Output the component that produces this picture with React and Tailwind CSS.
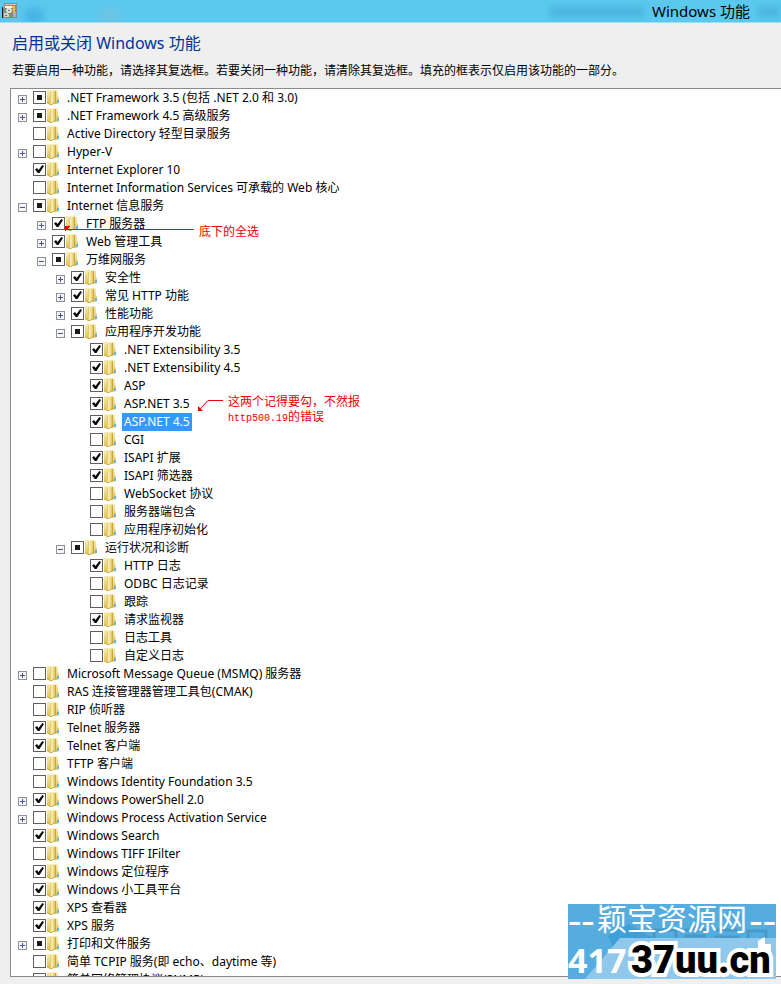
import React, { useState } from 'react'

// level, label, state ('on' | 'off' | 'part'), expander ('+' | '-' | '')
const FEATURES = [
  [0, '.NET Framework 3.5 (包括 .NET 2.0 和 3.0)', 'part', '+'],
  [0, '.NET Framework 4.5 高级服务', 'part', '+'],
  [0, 'Active Directory 轻型目录服务', 'off', ''],
  [0, 'Hyper-V', 'off', '+'],
  [0, 'Internet Explorer 10', 'on', ''],
  [0, 'Internet Information Services 可承载的 Web 核心', 'off', ''],
  [0, 'Internet 信息服务', 'part', '-'],
  [1, 'FTP 服务器', 'on', '+'],
  [1, 'Web 管理工具', 'on', '+'],
  [1, '万维网服务', 'part', '-'],
  [2, '安全性', 'on', '+'],
  [2, '常见 HTTP 功能', 'on', '+'],
  [2, '性能功能', 'on', '+'],
  [2, '应用程序开发功能', 'part', '-'],
  [3, '.NET Extensibility 3.5', 'on', ''],
  [3, '.NET Extensibility 4.5', 'on', ''],
  [3, 'ASP', 'on', ''],
  [3, 'ASP.NET 3.5', 'on', ''],
  [3, 'ASP.NET 4.5', 'on', ''],
  [3, 'CGI', 'off', ''],
  [3, 'ISAPI 扩展', 'on', ''],
  [3, 'ISAPI 筛选器', 'on', ''],
  [3, 'WebSocket 协议', 'off', ''],
  [3, '服务器端包含', 'off', ''],
  [3, '应用程序初始化', 'off', ''],
  [2, '运行状况和诊断', 'part', '-'],
  [3, 'HTTP 日志', 'on', ''],
  [3, 'ODBC 日志记录', 'off', ''],
  [3, '跟踪', 'off', ''],
  [3, '请求监视器', 'on', ''],
  [3, '日志工具', 'off', ''],
  [3, '自定义日志', 'off', ''],
  [0, 'Microsoft Message Queue (MSMQ) 服务器', 'off', '+'],
  [0, 'RAS 连接管理器管理工具包(CMAK)', 'off', ''],
  [0, 'RIP 侦听器', 'off', ''],
  [0, 'Telnet 服务器', 'on', ''],
  [0, 'Telnet 客户端', 'on', ''],
  [0, 'TFTP 客户端', 'off', ''],
  [0, 'Windows Identity Foundation 3.5', 'off', ''],
  [0, 'Windows PowerShell 2.0', 'on', '+'],
  [0, 'Windows Process Activation Service', 'off', '+'],
  [0, 'Windows Search', 'on', ''],
  [0, 'Windows TIFF IFilter', 'off', ''],
  [0, 'Windows 定位程序', 'on', ''],
  [0, 'Windows 小工具平台', 'on', ''],
  [0, 'XPS 查看器', 'on', ''],
  [0, 'XPS 服务', 'on', ''],
  [0, '打印和文件服务', 'part', '+'],
  [0, '简单 TCPIP 服务(即 echo、daytime 等)', 'off', ''],
  [0, '简单网络管理协议(SNMP)', 'off', ''],
]

const INDENT = ['pl-[7px]', 'pl-[26px]', 'pl-[45px]', 'pl-[64px]']

const SELECTED = 'ASP.NET 4.5'

function TitleIcon() {
  return (
    <svg width="16" height="16" viewBox="0 0 16 16" shapeRendering="crispEdges" aria-hidden="true">
      <path d="M2 0h13v15H2z" fill="#8f8a84" />
      <path d="M3 1h11v1H3z" fill="#c9c5be" />
      <path d="M3 3h10v2H3z" fill="#f6f3ea" />
      <path d="M10 3h3v6h-2v-3h-1z" fill="#f0b93c" />
      <path d="M0 4h1v11H0z" fill="#1c1c1c" />
      <path d="M1 5h10v10H1z" fill="#8b8880" />
      <path d="M5 5h4v1h1v3H9v1H5V9H4V6h1z" fill="#d9ddd0" />
      <path d="M6 7h2v1H6z" fill="#6d7a68" />
      <path d="M2 10h4v1h1v3H2z" fill="#cfd6c6" />
      <path d="M3 12h2v1H3z" fill="#5d6a5a" />
      <path d="M11 9h3v5h-3z" fill="#b3aea6" />
    </svg>
  )
}

function FolderIcon() {
  return (
    <svg className="shrink-0" width="14" height="15" viewBox="0 0 14 15" aria-hidden="true">
      <defs>
        <linearGradient id="folderFront" x1="0" x2="1">
          <stop offset="0" stopColor="#d9bb55" />
          <stop offset="0.35" stopColor="#fbf3bd" />
          <stop offset="1" stopColor="#dfc157" />
        </linearGradient>
        <linearGradient id="folderBack" x1="0" x2="0" y1="0" y2="1">
          <stop offset="0" stopColor="#f8efb6" />
          <stop offset="1" stopColor="#dfc052" />
        </linearGradient>
      </defs>
      <path d="M1 0h10l1 1v6l1 1v5l-3 1H2l-1-1z" fill="url(#folderBack)" />
      <path d="M4 2l1-1h4v12l-3 2H4z" fill="url(#folderFront)" />
      <path d="M9.500 1v12" stroke="#c8a73e" fill="none" />
      <path d="M1 12.500l3 2h2l3-2" stroke="#cfae45" fill="none" />
      <path d="M11 10h2v3h-2z" fill="#62b4e4" />
    </svg>
  )
}

function Expander({ open, label }) {
  return (
    <button type="button" aria-label={label} aria-expanded={open} className="mt-1 block h-[9px] w-[9px]">
      <svg width="9" height="9" viewBox="0 0 9 9" shapeRendering="crispEdges" aria-hidden="true">
        <path d="M0.500 0.500h8v8h-8z" fill="#f7f7f7" stroke="#919191" />
        <path d="M2 4h5v1H2z" fill="#3b55a5" />
        {!open && <path d="M4 2h1v5H4z" fill="#3b55a5" />}
      </svg>
    </button>
  )
}

function FeatureCheckbox({ id, state, onChange }) {
  return (
    <span className="relative h-[13px] w-[13px] shrink-0">
      <input
        id={id}
        type="checkbox"
        checked={state === 'on'}
        onChange={onChange}
        className="block h-[13px] w-[13px] appearance-none border border-[#5f5f5f] bg-white"
      />
      <svg className="pointer-events-none absolute inset-0" width="13" height="13" viewBox="0 0 13 13" aria-hidden="true">
        {state === 'on' && <path d="M2 6.500l2-1.500 1.500 2L9.300 2l1.700 1L6.500 10H4.800z" fill="#0a0a0a" />}
        {state === 'part' && <path d="M4 4h5v5H4z" fill="#1a1a1a" />}
      </svg>
    </span>
  )
}

function FeatureRow({ index, feature, state, onToggle }) {
  const [level, label, , expander] = feature
  const id = `feature-${index}`

  return (
    <li className={`flex h-[18px] items-center whitespace-nowrap pb-px ${INDENT[level]}`}>
      <span className="mr-[6px] w-[9px] shrink-0">
        {expander && <Expander open={expander === '-'} label={label} />}
      </span>
      <FeatureCheckbox id={id} state={state} onChange={onToggle} />
      <FolderIcon />
      <label
        htmlFor={id}
        className={`ml-[5px] self-start px-[2px] leading-[18px] ${label === SELECTED ? 'bg-[#3399ff] text-white' : ''}`}
      >
        {label}
      </label>
    </li>
  )
}

// Red notes with arrows laid over the tree
function Notes() {
  return (
    <div className="pointer-events-none absolute inset-0 text-xs text-[#f00000]">
      <svg className="absolute left-[53px] top-[133px]" width="132" height="14" viewBox="0 0 132 14" shapeRendering="crispEdges" aria-hidden="true">
        <path d="M2 7h128v1H2z" fill="#f00000" />
        <path d="M1 4h5L1 9z" fill="#f00000" />
      </svg>
      <p className="absolute left-[188px] top-[135px] leading-4">底下的全选</p>
      <svg className="absolute left-[186px] top-[308px]" width="28" height="16" viewBox="0 0 28 16" aria-hidden="true">
        <path d="M26 3.500H11L3 12" fill="none" stroke="#f00000" />
        <path d="M1 9v5h5z" fill="#f00000" />
      </svg>
      <p className="absolute left-[217px] top-[305px] leading-[15px]">
        这两个记得要勾，不然报
        <br />
        <span className="font-['Liberation_Mono',monospace] text-[10px]">http500.19</span>的错误
      </p>
    </div>
  )
}

function Watermark() {
  return (
    <div className="absolute bottom-[5px] right-[5px] h-[75px] w-[208px] bg-[#55addf] text-white">
      <svg className="absolute inset-0" width="208" height="75" viewBox="0 0 208 75" aria-hidden="true">
        <path d="M40 32l20-12 26 14-40 12z" fill="#3f9fd8" />
        <g fill="none" stroke="#4799c8" strokeWidth="3">
          <path d="M86 26h22v12H86zM116 26h22M116 32h22M127 22v12M148 26h22M146 33h26M180 40V27h18v13" />
        </g>
        <path d="M52 34h156v41H17z" fill="#8fc8ea" />
        <path d="M190 37l7-4v7h6v32h-13z" fill="#ffffff" />
      </svg>
      <p className="absolute left-0 top-0 flex w-full items-center justify-between whitespace-nowrap font-['Liberation_Serif',serif] text-[40px] leading-8">
        --
        <span className="font-['Liberation_Serif','Noto_Sans_CJK_SC',serif] text-3xl leading-8">颖宝资源网</span>
        --
      </p>
      <div className="absolute bottom-0 left-0 flex items-center whitespace-nowrap">
        <p className="w-[63px] font-['Open_Sans',sans-serif] text-[34px] font-bold leading-8">417</p>
        <p className="font-['Roboto',sans-serif] text-[38px] font-black leading-[38px] text-black [-webkit-text-stroke:8px_#ffffff] [paint-order:stroke_fill]">
          37uu.cn
        </p>
      </div>
    </div>
  )
}

// Soft shapes of the windows behind the glass title bar
function GlassSmudges() {
  return (
    <>
      <span className="absolute left-6 top-2 h-4 w-5 rounded-full bg-[#48b4e4] blur-[3px]" />
      <span className="absolute left-[98px] top-2 h-4 w-6 rounded-full bg-[#6cc4e4] blur-[3px]" />
      <span className="absolute right-[136px] top-[6px] h-3 w-24 rounded-full bg-[#4db6de] blur-[3px]" />
      <span className="absolute right-0 top-[6px] h-3 w-6 rounded-full bg-[#4db6de] blur-[3px]" />
    </>
  )
}

export default function App() {
  const [states, setStates] = useState(FEATURES.map((f) => f[2]))

  const toggle = (index) => {
    setStates((prev) => prev.map((s, i) => (i === index ? (s === 'on' ? 'off' : 'on') : s)))
  }

  return (
    <div className="relative flex h-screen flex-col overflow-hidden bg-[#efefef] font-['Noto_Sans','Noto_Sans_CJK_SC',sans-serif] text-xs text-black">
      <header className="relative flex h-[23px] shrink-0 items-center justify-between overflow-hidden border-b border-[#a5dcf0] bg-[#5bc8ee] pl-[2px] pr-[31px]">
        <GlassSmudges />
        <TitleIcon />
        <span className="relative text-[15px]">Windows 功能</span>
      </header>
      <main className="flex min-h-0 grow flex-col pb-[7px] pl-[10px]">
        <h1 className="mt-2 pl-[2px] text-base leading-6 text-[#003399]">启用或关闭 Windows 功能</h1>
        <p className="mb-[9px] mt-2 pl-[2px] leading-4">若要启用一种功能，请选择其复选框。若要关闭一种功能，请清除其复选框。填充的框表示仅启用该功能的一部分。</p>
        <div className="relative min-h-0 grow overflow-hidden border-y border-l border-[#8a8a8a] bg-white">
          <ul>
            {FEATURES.map((feature, i) => (
              <FeatureRow key={i} index={i} feature={feature} state={states[i]} onToggle={() => toggle(i)} />
            ))}
          </ul>
          <Notes />
        </div>
      </main>
      <Watermark />
    </div>
  )
}
